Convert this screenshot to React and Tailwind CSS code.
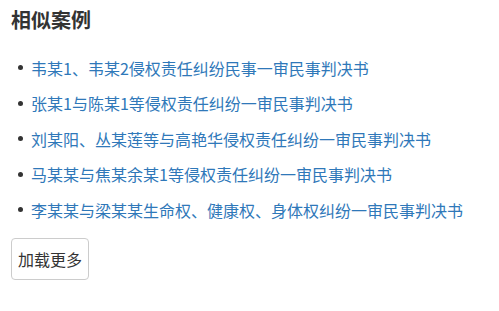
import React from "react";

const items = [
  "韦某1、韦某2侵权责任纠纷民事一审民事判决书",
  "张某1与陈某1等侵权责任纠纷一审民事判决书",
  "刘某阳、丛某莲等与高艳华侵权责任纠纷一审民事判决书",
  "马某某与焦某余某1等侵权责任纠纷一审民事判决书",
  "李某某与梁某某生命权、健康权、身体权纠纷一审民事判决书",
];

export default function App() {
  return (
    <div
      className="w-[499px] h-[311px] bg-white pl-[11px] pt-[9px]"
      style={{ fontFamily: '"Noto Sans CJK SC", "Noto Sans", sans-serif' }}
    >
      <h2 className="text-[20px] leading-[22px] font-bold text-[#333333]">相似案例</h2>
      <ul className="mt-[19px]">
        {items.map((t) => (
          <li key={t} className="flex items-center h-[35.5px]">
            <span className="ml-[7px] w-[5px] h-[5px] rounded-full bg-[#333333] shrink-0" />
            <a href="#" className="ml-[8px] text-[16px] leading-[24px] text-[#2f78b9] whitespace-nowrap">
              {t}
            </a>
          </li>
        ))}
      </ul>
      <button className="mt-[10px] h-[42px] px-[6px] border border-[#cccccc] rounded-[4px] bg-white text-[16px] leading-[24px] text-[#333333]">
        加载更多
      </button>
    </div>
  );
}
